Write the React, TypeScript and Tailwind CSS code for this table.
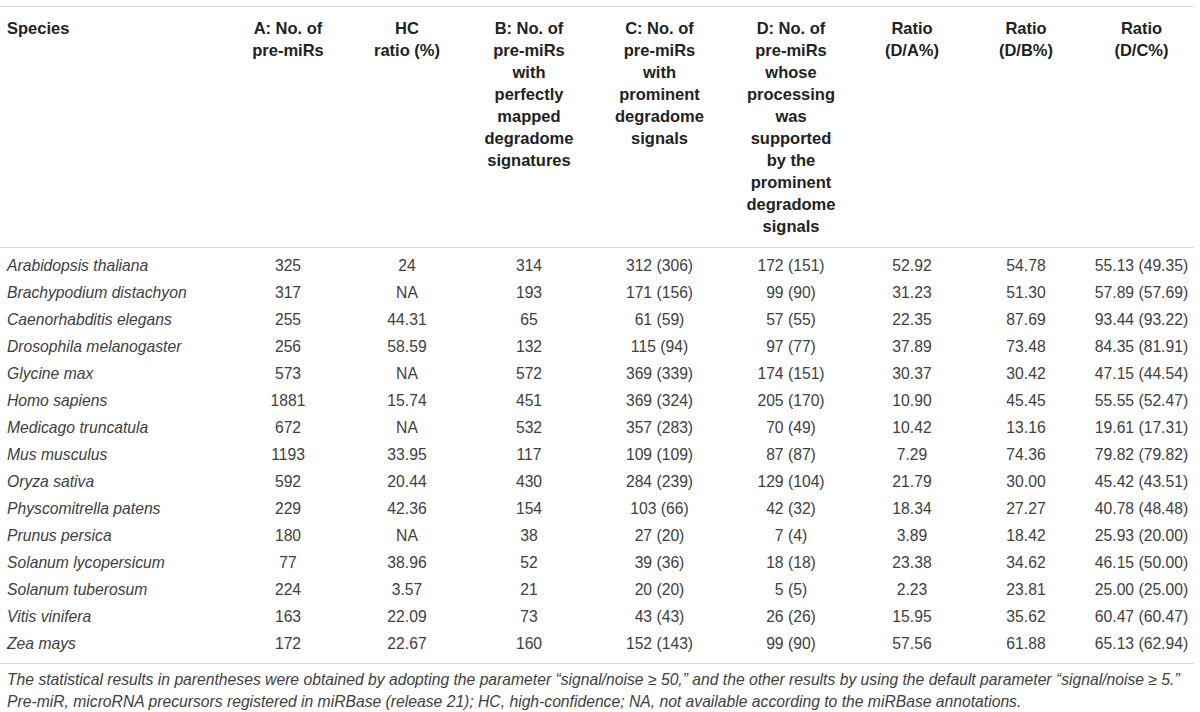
import React from "react";

const rows: string[][] = [
  ["Arabidopsis thaliana", "325", "24", "314", "312 (306)", "172 (151)", "52.92", "54.78", "55.13 (49.35)"],
  ["Brachypodium distachyon", "317", "NA", "193", "171 (156)", "99 (90)", "31.23", "51.30", "57.89 (57.69)"],
  ["Caenorhabditis elegans", "255", "44.31", "65", "61 (59)", "57 (55)", "22.35", "87.69", "93.44 (93.22)"],
  ["Drosophila melanogaster", "256", "58.59", "132", "115 (94)", "97 (77)", "37.89", "73.48", "84.35 (81.91)"],
  ["Glycine max", "573", "NA", "572", "369 (339)", "174 (151)", "30.37", "30.42", "47.15 (44.54)"],
  ["Homo sapiens", "1881", "15.74", "451", "369 (324)", "205 (170)", "10.90", "45.45", "55.55 (52.47)"],
  ["Medicago truncatula", "672", "NA", "532", "357 (283)", "70 (49)", "10.42", "13.16", "19.61 (17.31)"],
  ["Mus musculus", "1193", "33.95", "117", "109 (109)", "87 (87)", "7.29", "74.36", "79.82 (79.82)"],
  ["Oryza sativa", "592", "20.44", "430", "284 (239)", "129 (104)", "21.79", "30.00", "45.42 (43.51)"],
  ["Physcomitrella patens", "229", "42.36", "154", "103 (66)", "42 (32)", "18.34", "27.27", "40.78 (48.48)"],
  ["Prunus persica", "180", "NA", "38", "27 (20)", "7 (4)", "3.89", "18.42", "25.93 (20.00)"],
  ["Solanum lycopersicum", "77", "38.96", "52", "39 (36)", "18 (18)", "23.38", "34.62", "46.15 (50.00)"],
  ["Solanum tuberosum", "224", "3.57", "21", "20 (20)", "5 (5)", "2.23", "23.81", "25.00 (25.00)"],
  ["Vitis vinifera", "163", "22.09", "73", "43 (43)", "26 (26)", "15.95", "35.62", "60.47 (60.47)"],
  ["Zea mays", "172", "22.67", "160", "152 (143)", "99 (90)", "57.56", "61.88", "65.13 (62.94)"],
];

const headers: string[][] = [
  ["A: No. of", "pre-miRs"],
  ["HC", "ratio (%)"],
  ["B: No. of", "pre-miRs", "with", "perfectly", "mapped", "degradome", "signatures"],
  ["C: No. of", "pre-miRs", "with", "prominent", "degradome", "signals"],
  ["D: No. of", "pre-miRs", "whose", "processing", "was", "supported", "by the", "prominent", "degradome", "signals"],
  ["Ratio", "(D/A%)"],
  ["Ratio", "(D/B%)"],
  ["Ratio", "(D/C%)"],
];

const cols = "grid grid-cols-[228px_120px_118px_126px_135px_128px_114px_114px_117px]";

export default function App() {
  return (
    <div
      className="w-[1200px] h-[712px] bg-white overflow-hidden"
      style={{ fontFamily: '"Liberation Sans", Arial, Helvetica, sans-serif' }}
    >
      <div className="mt-[6px] w-[1194px] border-t border-[#d6d6d6]">
        <div className={`${cols} items-start pt-[10px] pb-[10px] border-b border-[#d6d6d6] text-[16.5px] leading-[22px] font-bold text-[#222]`}>
          <div className="pl-[7px]">Species</div>
          {headers.map((h, i) => (
            <div key={i} className="flex flex-col items-center text-center">
              {h.map((l, j) => (
                <span key={j} className="whitespace-nowrap">{l}</span>
              ))}
            </div>
          ))}
        </div>
        <div className="pt-[4px] pb-[6px] border-b border-[#d6d6d6] text-[15.7px] text-[#404040]">
          {rows.map((r, i) => (
            <div key={i} className={`${cols} h-[27px] items-center`}>
              <div className="pl-[7px] italic whitespace-nowrap">{r[0]}</div>
              {r.slice(1).map((v, j) => (
                <div key={j} className="text-center whitespace-nowrap">{v}</div>
              ))}
            </div>
          ))}
        </div>
        <div className="pt-[5px] pl-[7px] italic text-[15.7px] leading-[22px] text-[#404040]">
          <div className="whitespace-nowrap">
            The statistical results in parentheses were obtained by adopting the parameter “signal/noise ≥ 50,” and the other results by using the default parameter “signal/noise ≥ 5.”
          </div>
          <div className="whitespace-nowrap">
            Pre-miR, microRNA precursors registered in miRBase (release 21); HC, high-confidence; NA, not available according to the miRBase annotations.
          </div>
        </div>
      </div>
    </div>
  );
}
